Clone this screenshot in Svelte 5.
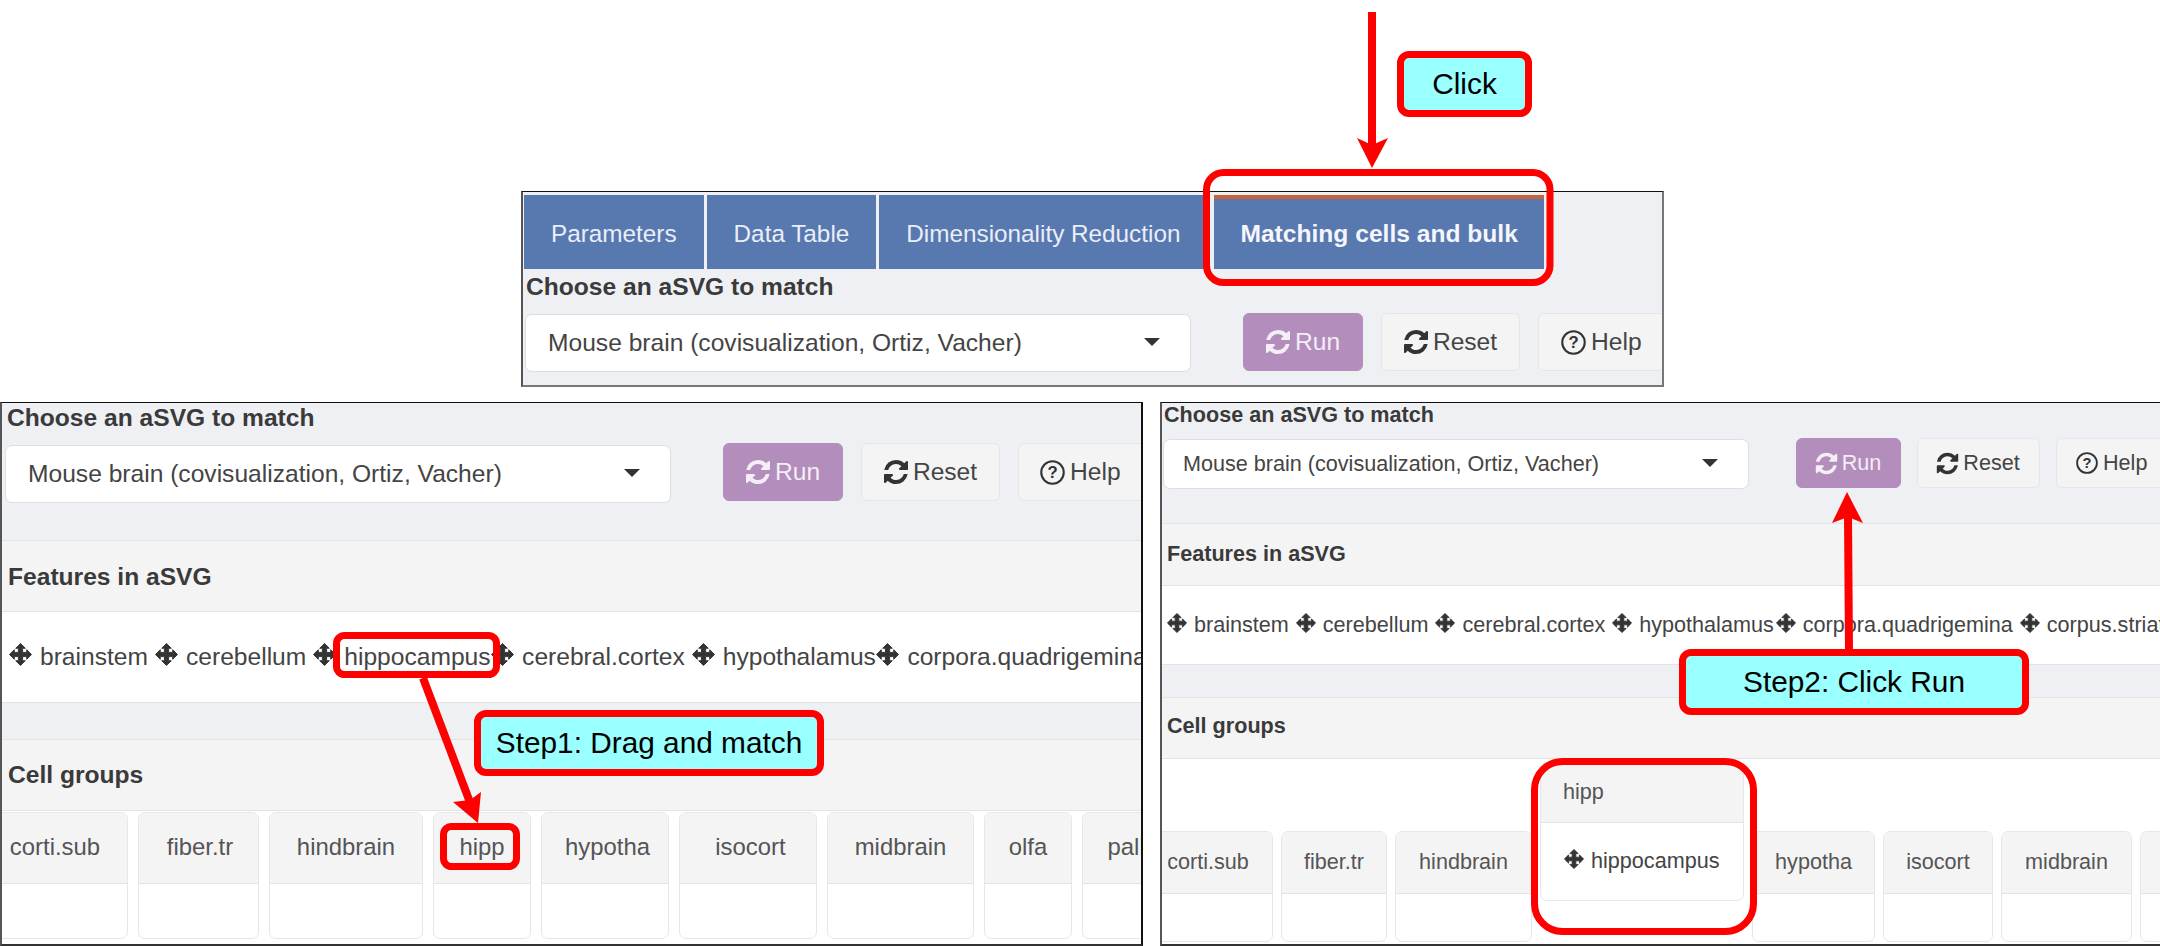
<script>
  const refresh = "M1639 1056q0 5-1 7-64 268-268 434.5t-478 166.5q-146 0-282.5-55t-243.5-157l-129 129q-19 19-45 19t-45-19-19-45v-448q0-26 19-45t45-19h448q26 0 45 19t19 45-19 45l-137 137q71 66 161 102t187 36q134 0 250-65t186-179q11-17 53-117 8-23 30-23h192q13 0 22.5 9.5t9.5 22.5zm25-800v448q0 26-19 45t-45 19h-448q-26 0-45-19t-19-45 19-45l138-138q-148-137-349-137-134 0-250 65t-186 179q-11 17-53 117-8 23-30 23h-199q-13 0-22.5-9.5t-9.5-22.5v-7q65-268 270-434.5t480-166.5q146 0 284 55.5t245 156.5l130-129q19-19 45-19t45 19 19 45z";
  const move = "M12 0.5L17 5.5H14.2V9.8H18.5V7L23.5 12L18.5 17V14.2H14.2V18.5H17L12 23.5L7 18.5H9.8V14.2H5.5V17L0.5 12L5.5 7V9.8H9.8V5.5H7Z";
  const tabs = ["Parameters", "Data Table", "Dimensionality Reduction"];
  const leftFeatures = [
    { name: "brainstem" }, { name: "cerebellum" }, { name: "hippocampus", tight: true },
    { name: "cerebral.cortex" }, { name: "hypothalamus", tight: true }, { name: "corpora.quadrigemina" }
  ];
  const rightFeatures = [
    { name: "brainstem" }, { name: "cerebellum" }, { name: "cerebral.cortex" },
    { name: "hypothalamus", tight: true }, { name: "corpora.quadrigemina" }, { name: "corpus.striatum" }
  ];
  const leftCells = [
    { name: "corti.sub", w: 146 }, { name: "fiber.tr", w: 121, off: 3 }, { name: "hindbrain", w: 154 },
    { name: "hipp", w: 98 }, { name: "hypotha", w: 128, off: 5 }, { name: "isocort", w: 138, off: 5 },
    { name: "midbrain", w: 147 }, { name: "olfa", w: 88 }, { name: "pallidum", w: 140 }
  ];
  const rightCells = [
    { name: "corti.sub", w: 130 }, { name: "fiber.tr", w: 106 }, { name: "hindbrain", w: 137 },
    { name: "hipp", w: 204, inner: "hippocampus" }, { name: "hypotha", w: 123 }, { name: "isocort", w: 110 },
    { name: "midbrain", w: 131 }, { name: "olfa", w: 100 }
  ];
</script>

{#snippet moveIcon()}
  <svg class="move" viewBox="0 0 24 24"><path d={move} /></svg>
{/snippet}

{#snippet controls()}
  <div class="label">Choose an aSVG to match</div>
  <div class="controls">
    <div class="select">
      <span>Mouse brain (covisualization, Ortiz, Vacher)</span>
      <i class="caret"></i>
    </div>
    <button class="btn run">
      <svg class="ico" viewBox="0 0 1792 1792"><path d={refresh} /></svg>
      <span>Run</span>
    </button>
    <button class="btn reset">
      <svg class="ico" viewBox="0 0 1792 1792"><path d={refresh} /></svg>
      <span>Reset</span>
    </button>
    <button class="btn help">
      <svg class="ico q" viewBox="0 0 24 24">
        <circle cx="12" cy="12" r="10.8" />
        <text x="12" y="17.6">?</text>
      </svg>
      <span>Help</span>
    </button>
  </div>
{/snippet}

{#snippet card(c)}
  <div class="card" class:tall={c.inner} style:width="{c.w}px">
    <div class="card-head" style:padding-left={c.off ? `${c.off}px` : undefined}>{c.name}</div>
    <div class="card-body">
      {#if c.inner}
        <span class="chip">{@render moveIcon()}<span>{c.inner}</span></span>
      {/if}
    </div>
  </div>
{/snippet}

<div class="stage">
  <section class="panel top">
    <nav class="tabs">
      {#each tabs as t}<div class="tab">{t}</div>{/each}
      <div class="tab active">Matching cells and bulk</div>
    </nav>
    {@render controls()}
  </section>

  <div class="row">
    <section class="panel left">
      {@render controls()}
      <div class="head">Features in aSVG</div>
      <div class="chips">
        {#each leftFeatures as f}
          <span class="chip" class:tight={f.tight}>{@render moveIcon()}<span>{f.name}</span></span>
        {/each}
      </div>
      <div class="gap"></div>
      <div class="head cg">Cell groups</div>
      <div class="cards">
        {#each leftCells as c}{@render card(c)}{/each}
      </div>
    </section>

    <section class="panel right">
      {@render controls()}
      <div class="head">Features in aSVG</div>
      <div class="chips">
        {#each rightFeatures as f}
          <span class="chip" class:tight={f.tight}>{@render moveIcon()}<span>{f.name}</span></span>
        {/each}
      </div>
      <div class="gap"></div>
      <div class="head cg">Cell groups</div>
      <div class="cards">
        {#each rightCells as c}{@render card(c)}{/each}
      </div>
    </section>
  </div>

  <svg class="marks" viewBox="0 0 2160 946">
    <g class="frame">
      <rect x="1206.5" y="172.5" width="343.5" height="110" rx="17" />
      <rect x="336.5" y="635.5" width="160" height="39" rx="8" />
      <rect x="443.5" y="826.5" width="73" height="40" rx="8" />
      <rect x="1534.5" y="761.5" width="219" height="170" rx="28" />
    </g>
    <g class="line">
      <line x1="1372" y1="12" x2="1372" y2="145" />
      <line x1="423" y1="678" x2="471" y2="805" />
      <line x1="1848" y1="515" x2="1849" y2="652" />
    </g>
    <g class="head-mark">
      <polygon points="1372,168 1357,138 1372,145 1388,138" />
      <polygon points="478,823 453,802 470,800 481,792" />
      <polygon points="1847,492 1832,523 1848,517 1863,523" />
    </g>
  </svg>

  <div class="note click">Click</div>
  <div class="note step1">Step1: Drag and match</div>
  <div class="note step2">Step2: Click Run</div>
</div>

<style>
  :global(body) {
    margin: 0;
    background: #fff;
  }
  .stage {
    position: relative;
    width: 2160px;
    height: 946px;
    padding-top: 191px;
    box-sizing: border-box;
    overflow: hidden;
    font-family: "Liberation Sans", Arial, sans-serif;
    color: #3a3a3a;
  }
  .panel {
    box-sizing: border-box;
    background: #eef0f3;
    overflow: hidden;
    border-style: solid;
    border-width: 1px 2px 2px 2px;
    border-color: #111 #111 #555 #555;
    font-size: 24.6px;
    --label-h: 40px;
    --label-lh: 30px;
    --label-top: 0px;
    --row-h: 60px;
    --row-mb: 37px;
    --sel-top: 2px;
    --sel-h: 58px;
    --sel-w: 666px;
    --sel-ml: 3px;
    --sel-pl: 22px;
    --sel-mr: 52px;
    --run-w: 120px;
    --reset-w: 139px;
    --help-w: 140px;
    --btn-h: 58px;
    --btn-gap: 18px;
    --ico: 28px;
    --q: 25px;
    --help-pl: 22px;
    --label-pl: 5px;
    --head-pl: 6px;
  }
  .top {
    width: 1143px;
    height: 196px;
    margin-left: 521px;
    border-right-color: #777;
    border-bottom-color: #777;
    --label-top: 3px;
    --label-h: 44px;
    --label-pl: 3px;
    --sel-top: 1px;
    --sel-ml: 2px;
    --row-h: 60px;
    --row-mb: 0px;
  }
  .row {
    display: flex;
    gap: 17px;
    margin-top: 15px;
    height: 544px;
  }
  .left {
    width: 1143px;
    height: 544px;
    border-right-color: #111;
    border-bottom-color: #333;
    --help-pl: 21px;
  }
  .right {
    width: 1000px;
    height: 544px;
    border-right: 0;
    border-bottom-color: #333;
    font-size: 21.6px;
    --label-h: 35px;
    --label-lh: 24px;
    --label-pl: 2px;
    --row-h: 51px;
    --row-mb: 34px;
    --sel-top: 1px;
    --sel-h: 50px;
    --sel-w: 586px;
    --sel-ml: 1px;
    --sel-pl: 19px;
    --sel-mr: 47px;
    --run-w: 105px;
    --reset-w: 123px;
    --help-w: 120px;
    --btn-h: 50px;
    --btn-gap: 16px;
    --ico: 25px;
    --q: 22px;
    --help-pl: 19px;
    --head-pl: 5px;
  }

  .tabs {
    display: flex;
    gap: 3px;
    padding: 3px 0 0 0;
    height: 74px;
    margin-left: 1px;
  }
  .tab {
    display: flex;
    align-items: center;
    padding: 3px 27px 0;
    background: #5878b0;
    color: #e9eef7;
    font-size: 24.3px;
    white-space: nowrap;
  }
  .tab.active {
    font-size: 24.6px;
    font-weight: 700;
    color: #f4f6fb;
    border-top: 4px solid #c8623c;
    box-sizing: border-box;
    margin-left: 3.5px;
    padding: 0 26.5px 1px;
  }

  .label {
    box-sizing: border-box;
    height: var(--label-h);
    padding: var(--label-top) 0 0 var(--label-pl);
    line-height: var(--label-lh);
    font-weight: 700;
    white-space: nowrap;
  }
  .controls {
    display: flex;
    align-items: flex-start;
    height: var(--row-h);
    margin-bottom: var(--row-mb);
  }
  .select {
    box-sizing: border-box;
    flex: none;
    display: flex;
    align-items: center;
    justify-content: space-between;
    width: var(--sel-w);
    height: var(--sel-h);
    margin: var(--sel-top) var(--sel-mr) 0 var(--sel-ml);
    padding: 0 30px 0 var(--sel-pl);
    background: #fff;
    border: 1.5px solid #dcdee2;
    border-radius: 7px;
    color: #444;
    white-space: nowrap;
  }
  .caret {
    width: 0;
    height: 0;
    border-left: 8px solid transparent;
    border-right: 8px solid transparent;
    border-top: 8px solid #333;
    margin-top: -3px;
  }
  .btn {
    box-sizing: border-box;
    flex: none;
    display: flex;
    align-items: center;
    justify-content: center;
    gap: 5px;
    height: var(--btn-h);
    padding: 0;
    font: inherit;
    color: #444;
    background: #f4f4f5;
    border: 1.5px solid #e5e6e8;
    border-radius: 6px;
    margin-right: var(--btn-gap);
  }
  .run {
    width: var(--run-w);
    background: #b38dbb;
    border-color: #b38dbb;
    color: #f4eef6;
    fill: #f4eef6;
  }
  .reset {
    width: var(--reset-w);
  }
  .help {
    width: var(--help-w);
    justify-content: flex-start;
    padding-left: var(--help-pl);
  }
  .ico {
    width: var(--ico);
    height: var(--ico);
    flex: none;
    fill: currentColor;
    margin: 0 -2px;
  }
  .reset .ico {
    fill: #333;
  }
  .ico.q {
    width: var(--q);
    height: var(--q);
    margin: 0;
    fill: none;
  }
  .ico.q circle {
    fill: none;
    stroke: #333;
    stroke-width: 2;
  }
  .ico.q text {
    fill: #333;
    stroke: none;
    font-size: 16px;
    font-weight: 700;
    text-anchor: middle;
    font-family: "Liberation Sans", Arial, sans-serif;
  }

  .head {
    box-sizing: border-box;
    display: flex;
    align-items: center;
    height: 72px;
    padding-left: var(--head-pl);
    padding-top: 1px;
    background: #f4f4f5;
    border-top: 1.5px solid #e2e3e5;
    border-bottom: 1.5px solid #e2e3e5;
    font-weight: 700;
  }
  .head.cg {
    padding-top: 0;
  }
  .chips {
    display: flex;
    align-items: center;
    height: 90px;
    padding-left: 7px;
    background: #fff;
    white-space: nowrap;
    color: #444;
  }
  .chip {
    display: inline-flex;
    align-items: center;
    flex: none;
    gap: 8px;
    margin-right: 7px;
    color: #444;
  }
  .chip.tight {
    margin-right: 0.5px;
  }
  .move {
    flex: none;
    width: 23px;
    height: 23px;
    margin-top: -5px;
    fill: #333;
    stroke: #333;
    stroke-width: 1;
    stroke-linejoin: round;
  }
  .gap {
    height: 37px;
    background: #eef0f3;
    border-top: 1.5px solid #e2e3e5;
    box-sizing: border-box;
  }
  .cards {
    display: flex;
    align-items: flex-start;
    gap: 10px;
    margin-left: -20px;
    background: #fff;
    height: 135px;
    padding-top: 1px;
    box-sizing: border-box;
  }
  .card {
    box-sizing: border-box;
    flex: none;
    border: 1.5px solid #e6e7e9;
    border-radius: 7px;
    background: #fff;
    overflow: hidden;
  }
  .card-head {
    box-sizing: border-box;
    display: flex;
    align-items: center;
    justify-content: center;
    height: 71px;
    padding-bottom: 3px;
    background: #f4f4f5;
    border-bottom: 1.5px solid #e2e3e5;
    color: #555;
    font-size: 23.9px;
    white-space: nowrap;
  }
  .card-body {
    height: 54px;
  }

  .right .head {
    height: 63px;
    padding-top: 0;
    padding-bottom: 2px;
  }
  .right .head.cg {
    height: 62px;
    padding-bottom: 4px;
  }
  .right .chips {
    height: 78px;
    padding-left: 5px;
  }
  .right .chip {
    gap: 7px;
    margin-right: 7px;
  }
  .right .chip.tight {
    margin-right: 2px;
  }
  .right .move {
    width: 20px;
    height: 20px;
    margin-top: -4px;
  }
  .right .gap {
    height: 33px;
  }
  .right .cards {
    gap: 8px;
    margin-left: -19px;
    height: 186px;
    padding-top: 72px;
  }
  .right .card-head {
    height: 62px;
    padding-bottom: 2px;
    font-size: 21.6px;
  }
  .right .card-body {
    height: 47px;
  }
  .card.tall {
    margin-top: -69px;
  }
  .right .card.tall .card-head {
    height: 60px;
    justify-content: flex-start;
    padding-left: 22px;
  }
  .right .card.tall .card-body {
    display: flex;
    align-items: center;
    height: 77px;
    padding: 0 23px 2px;
    box-sizing: border-box;
  }
  .card.tall .chip {
    margin: 0;
  }

  .marks {
    position: absolute;
    inset: 0;
    width: 2160px;
    height: 946px;
    pointer-events: none;
  }
  .frame rect {
    fill: none;
    stroke: #f00;
    stroke-width: 7;
  }
  .line line {
    stroke: #f00;
    stroke-width: 8;
  }
  .head-mark polygon {
    fill: #f00;
  }
  .note {
    position: absolute;
    box-sizing: border-box;
    display: flex;
    align-items: center;
    justify-content: center;
    background: #99ffff;
    border: 7px solid #f00;
    border-radius: 12px;
    color: #000;
    font-size: 29.8px;
    white-space: nowrap;
  }
  .click {
    left: 1397px;
    top: 51px;
    width: 135px;
    height: 66px;
  }
  .step1 {
    left: 474px;
    top: 710px;
    width: 350px;
    height: 66px;
  }
  .step2 {
    left: 1679px;
    top: 649px;
    width: 350px;
    height: 66px;
  }
</style>
